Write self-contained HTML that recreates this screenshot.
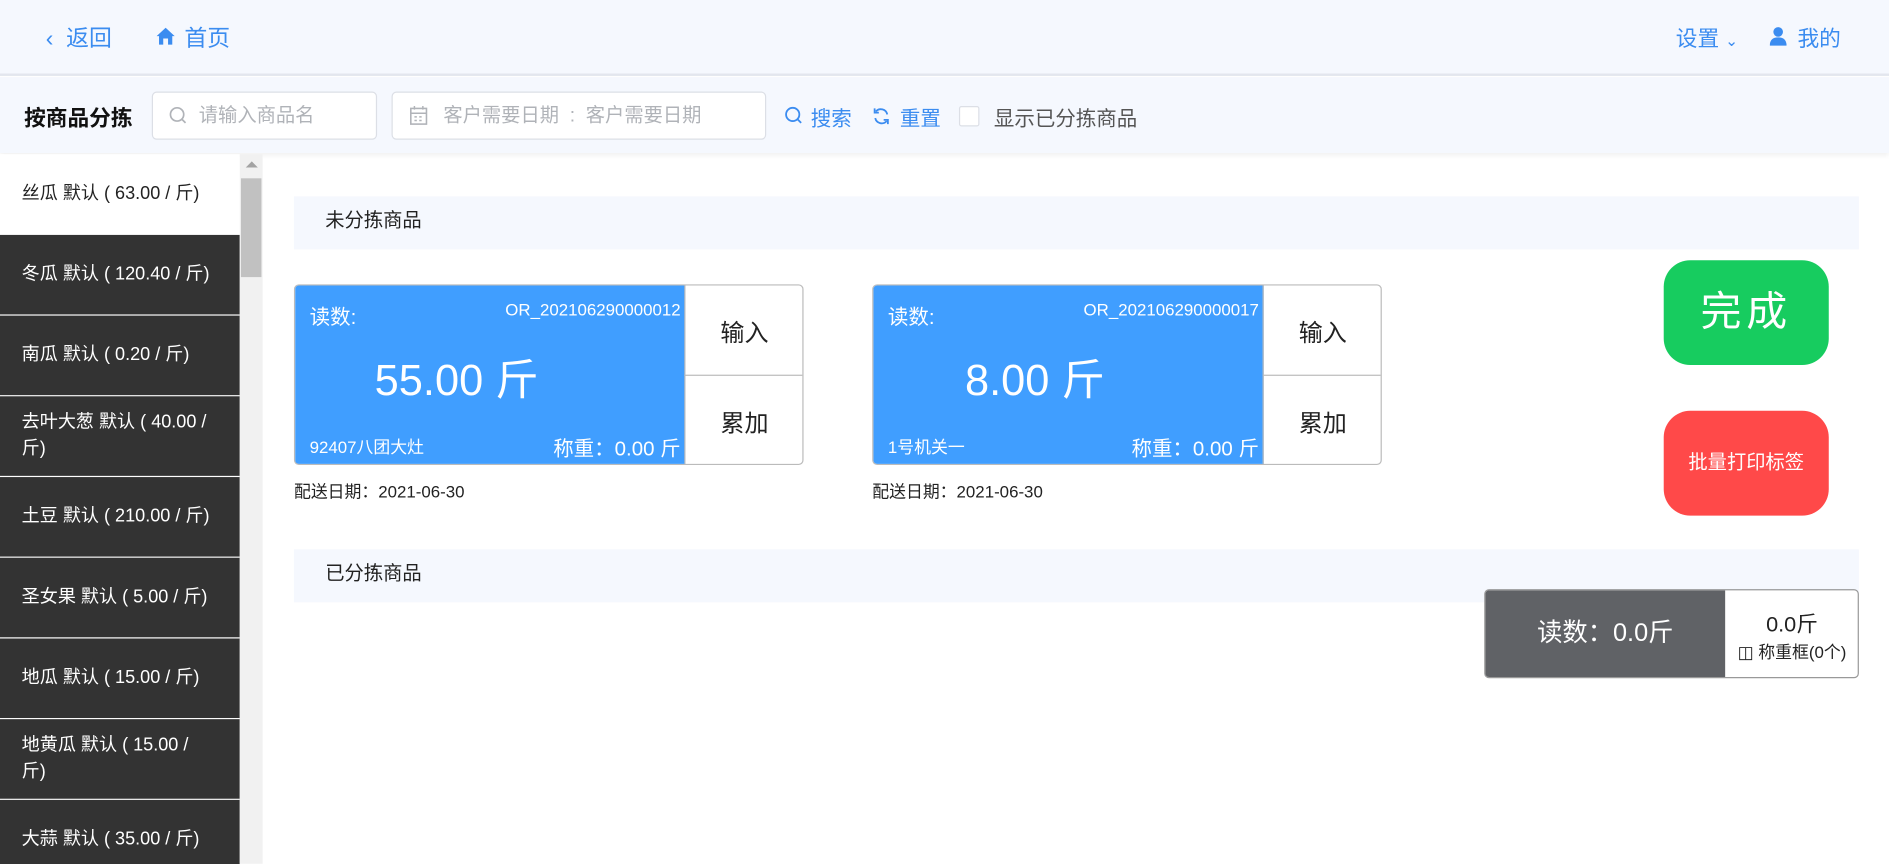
<!DOCTYPE html>
<html><head><meta charset="utf-8"><style>
*{box-sizing:border-box;margin:0;padding:0}
html,body{width:1889px;height:864px;overflow:hidden;background:#fff}
#w{width:1568px;height:717px;transform:scale(1.20472);transform-origin:0 0;position:relative;font-family:"Liberation Sans","Noto Sans CJK SC",sans-serif;color:#222}
.a{position:absolute}
.blue{color:#3b8cf0}
.hdr{left:0;top:0;width:1568px;height:63px;background:#f5f8fe;border-bottom:2px solid #e3e6ee}
.bar{left:0;top:64px;width:1568px;height:63px;background:#f5f8fe;box-shadow:0 2px 4px rgba(0,0,0,.06)}
.inp{background:#fff;border:1px solid #dcdfe6;border-radius:4px;color:#b0b3b8;font-size:16px;line-height:40px}
.side{left:0;top:128px;width:199px}
.it{height:67px;background:#333;color:#fff;font-size:15px;padding:0 0 0 18px;display:flex;align-items:center;border-bottom:1px solid #fff;line-height:22px;white-space:nowrap}
.sec{left:244px;width:1299px;height:44px;background:#f5f8fe;font-size:16px;line-height:42px;padding-left:26px}
.card{width:423px;height:150px;border:1px solid #bbb;border-radius:4px;overflow:hidden}
.bl{left:0;top:0;width:324px;height:150px;background:#409eff;color:#fff}
.btn{left:323px;width:99px;height:75px;font-size:20px;display:flex;align-items:center;justify-content:center;border-left:1px solid #bbb}
.dt{font-size:14px}
</style></head><body><div id="w">
<div class="a hdr">
<div class="a blue" style="left:38px;top:17px;font-size:19px">&#8249;&nbsp; 返回</div>
<svg class="a" style="left:129px;top:22px" width="17" height="16" viewBox="0 0 17 16"><path d="M8.5 1 L16 8 L14 8 L14 15 L10.5 15 L10.5 10 L6.5 10 L6.5 15 L3 15 L3 8 L1 8Z" fill="#3b8cf0"/></svg>
<div class="a blue" style="left:153px;top:17px;font-size:19px">首页</div>
<div class="a blue" style="left:1391px;top:18px;font-size:18px">设置 <span style="font-size:13px">&#8964;</span></div>
<svg class="a" style="left:1469px;top:22px" width="14" height="16" viewBox="0 0 14 16"><circle cx="7" cy="4.5" r="4" fill="#3b8cf0"/><path d="M0 16 Q0 9 7 9 Q14 9 14 16Z" fill="#3b8cf0"/></svg>
<div class="a blue" style="left:1492px;top:18px;font-size:18px">我的</div>
</div>
<div class="a bar">
<div class="a" style="left:20px;top:20px;font-size:18px;font-weight:bold;color:#111">按商品分拣</div>
<div class="a inp" style="left:126px;top:12px;width:187px;height:40px;padding-left:38px">请输入商品名
<svg class="a" style="left:13px;top:11px" width="16" height="16" viewBox="0 0 16 16"><circle cx="7" cy="7" r="5.5" stroke="#b0b3b8" stroke-width="1.4" fill="none"/><path d="M11 11L14 14" stroke="#b0b3b8" stroke-width="1.4"/></svg></div>
<div class="a inp" style="left:325px;top:12px;width:311px;height:40px;padding-left:42px">客户需要日期 &nbsp;:&nbsp; 客户需要日期
<svg class="a" style="left:14px;top:11px" width="15" height="16" viewBox="0 0 15 16"><rect x="1" y="2" width="13" height="13" stroke="#b0b3b8" fill="none" stroke-width="1.3"/><path d="M1 6H14M4 0V3M11 0V3M4 9H6M8 9H10M4 12H6M8 12H10" stroke="#b0b3b8" stroke-width="1.2"/></svg></div>
<svg class="a" style="left:651px;top:24px" width="16" height="16" viewBox="0 0 16 16"><circle cx="7" cy="7" r="5.5" stroke="#3b8cf0" stroke-width="1.5" fill="none"/><path d="M11 11L14 14" stroke="#3b8cf0" stroke-width="1.5"/></svg>
<div class="a blue" style="left:673px;top:20px;font-size:17px">搜索</div>
<svg class="a" style="left:724px;top:25px" width="15" height="15" viewBox="0 0 15 15"><path d="M12.5 6A5.5 5.5 0 0 0 3 3.5M2.5 9A5.5 5.5 0 0 0 12 11.5" stroke="#3b8cf0" stroke-width="1.5" fill="none"/><path d="M2 1V4.5H5.5M13 14V10.5H9.5" stroke="#3b8cf0" stroke-width="1.5" fill="none"/></svg>
<div class="a blue" style="left:747px;top:20px;font-size:17px">重置</div>
<div class="a" style="left:796px;top:24px;width:17px;height:17px;border:1px solid #dcdfe6;background:#fff;border-radius:2px"></div>
<div class="a" style="left:825px;top:20px;font-size:17px;color:#555">显示已分拣商品</div>
</div>
<div class="a side">
<div class="it" style="background:#fff;color:#222;height:67px">丝瓜 默认 ( 63.00 / 斤)</div>
<div class="it">冬瓜 默认 ( 120.40 / 斤)</div>
<div class="it">南瓜 默认 ( 0.20 / 斤)</div>
<div class="it">去叶大葱 默认 ( 40.00 /<br>斤)</div>
<div class="it">土豆 默认 ( 210.00 / 斤)</div>
<div class="it">圣女果 默认 ( 5.00 / 斤)</div>
<div class="it">地瓜 默认 ( 15.00 / 斤)</div>
<div class="it">地黄瓜 默认 ( 15.00 /<br>斤)</div>
<div class="it">大蒜 默认 ( 35.00 / 斤)</div>
</div>
<div class="a" style="left:199px;top:128px;width:19px;height:589px;background:#f1f1f1"></div>
<div class="a" style="left:200px;top:148px;width:17px;height:82px;background:#c1c1c1"></div>
<div class="a" style="left:204px;top:134px;width:0;height:0;border:5px solid transparent;border-bottom-color:#a3a3a3;border-top:0"></div>

<div class="a sec" style="top:163px">未分拣商品</div>
<div class="a card" style="left:244px;top:236px">
<div class="a bl"><div class="a" style="left:12px;top:12px;font-size:17px">读数:</div><div class="a" style="right:4px;top:12px;font-size:14px">OR_202106290000012</div><div class="a" style="left:66px;top:50px;font-size:36px">55.00 斤</div><div class="a" style="left:12px;top:124px;font-size:14px">92407八团大灶</div><div class="a" style="right:4px;top:121px;font-size:17px">称重：0.00 斤</div></div>
<div class="a btn" style="top:0;border-bottom:1px solid #bbb">输入</div><div class="a btn" style="top:75px">累加</div></div>
<div class="a dt" style="left:244px;top:398px">配送日期：2021-06-30</div>
<div class="a card" style="left:724px;top:236px">
<div class="a bl"><div class="a" style="left:12px;top:12px;font-size:17px">读数:</div><div class="a" style="right:4px;top:12px;font-size:14px">OR_202106290000017</div><div class="a" style="left:76px;top:50px;font-size:36px">8.00 斤</div><div class="a" style="left:12px;top:124px;font-size:14px">1号机关一</div><div class="a" style="right:4px;top:121px;font-size:17px">称重：0.00 斤</div></div>
<div class="a btn" style="top:0;border-bottom:1px solid #bbb">输入</div><div class="a btn" style="top:75px">累加</div></div>
<div class="a dt" style="left:724px;top:398px">配送日期：2021-06-30</div>
<div class="a" style="left:1381px;top:216px;width:137px;height:87px;background:#17cc5f;border-radius:22px;color:#fff;font-size:34px;text-align:center;line-height:87px;letter-spacing:4px">完成</div>
<div class="a" style="left:1381px;top:341px;width:137px;height:87px;background:#ff4949;border-radius:22px;color:#fff;font-size:16px;text-align:center;line-height:87px">批量打印标签</div>
<div class="a sec" style="top:456px">已分拣商品</div>
<div class="a" style="left:1232px;top:489px;width:311px;height:74px;border:1px solid #999;border-radius:4px;overflow:hidden;background:#fff">
<div class="a" style="left:0;top:0;width:199px;height:74px;background:#606266;color:#fff;font-size:21px;line-height:72px;text-align:center">读数：0.0斤</div>
<div class="a" style="left:199px;top:14px;width:111px;text-align:center;font-size:18px">0.0斤</div>
<div class="a" style="left:199px;top:41px;width:111px;text-align:center;font-size:14px">&#9707; 称重框(0个)</div>
</div>
</div></body></html>
